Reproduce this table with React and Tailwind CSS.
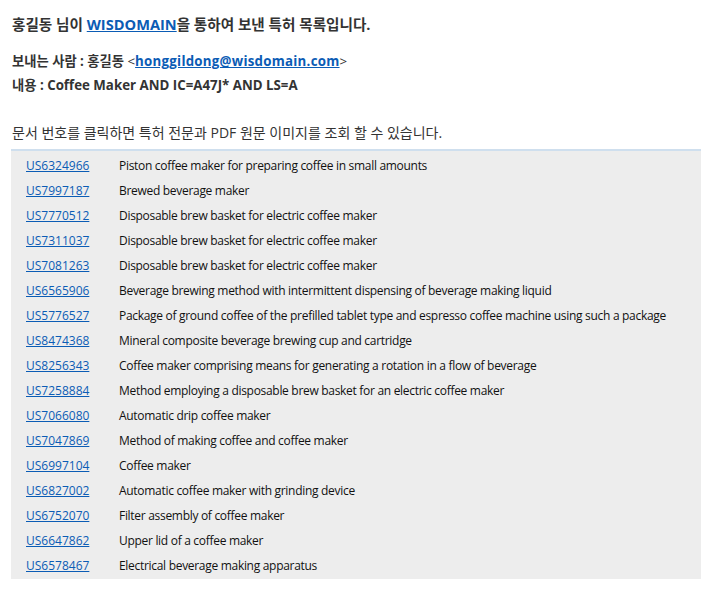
import React from "react";

const rows = [
  ["US6324966", "Piston coffee maker for preparing coffee in small amounts"],
  ["US7997187", "Brewed beverage maker"],
  ["US7770512", "Disposable brew basket for electric coffee maker"],
  ["US7311037", "Disposable brew basket for electric coffee maker"],
  ["US7081263", "Disposable brew basket for electric coffee maker"],
  ["US6565906", "Beverage brewing method with intermittent dispensing of beverage making liquid"],
  ["US5776527", "Package of ground coffee of the prefilled tablet type and espresso coffee machine using such a package"],
  ["US8474368", "Mineral composite beverage brewing cup and cartridge"],
  ["US8256343", "Coffee maker comprising means for generating a rotation in a flow of beverage"],
  ["US7258884", "Method employing a disposable brew basket for an electric coffee maker"],
  ["US7066080", "Automatic drip coffee maker"],
  ["US7047869", "Method of making coffee and coffee maker"],
  ["US6997104", "Coffee maker"],
  ["US6827002", "Automatic coffee maker with grinding device"],
  ["US6752070", "Filter assembly of coffee maker"],
  ["US6647862", "Upper lid of a coffee maker"],
  ["US6578467", "Electrical beverage making apparatus"],
];

export default function App() {
  return (
    <div
      className="w-[712px] h-[590px] bg-white text-[#222]"
      style={{ fontFamily: '"Open Sans", "Noto Sans CJK KR", sans-serif' }}
    >
      <div className="pt-[14px] pl-[12px]">
        <div className="text-[14.6px] font-bold leading-[20px] text-[#333]">
          홍길동 님이{" "}
          <a href="#" className="text-[#0b5cb5] underline">WISDOMAIN</a>을 통하여 보낸 특허 목록입니다.
        </div>
        <div className="mt-[15px] text-[13.3px] font-bold leading-[24px] text-[#333]">
          보내는 사람 : 홍길동 <span className="font-normal">&lt;</span>
          <a href="#" className="text-[#0b5cb5] underline tracking-[0.25px]">honggildong@wisdomain.com</a>
          <span className="font-normal">&gt;</span>
        </div>
        <div className="text-[13.3px] font-bold leading-[24px] text-[#333]">
          내용 : Coffee Maker AND IC=A47J* AND LS=A
        </div>
        <div className="mt-[27px] text-[14px] leading-[18px] text-[#333]">
          문서 번호를 클릭하면 특허 전문과 PDF 원문 이미지를 조회 할 수 있습니다.
        </div>
      </div>
      <div className="ml-[11px] mt-[7px] w-[690px] border-t-2 border-[#cfdfee] bg-[#ededed] pt-[2px] pb-[1px]">
        {rows.map(([num, title]) => (
          <div key={num} className="flex h-[25px] items-center text-[12px] text-[#111]">
            <a href="#" className="w-[108px] shrink-0 pl-[15px] text-[#0b5cb5] underline">{num}</a>
            <span className="tracking-[-0.3px]">{title}</span>
          </div>
        ))}
      </div>
    </div>
  );
}
